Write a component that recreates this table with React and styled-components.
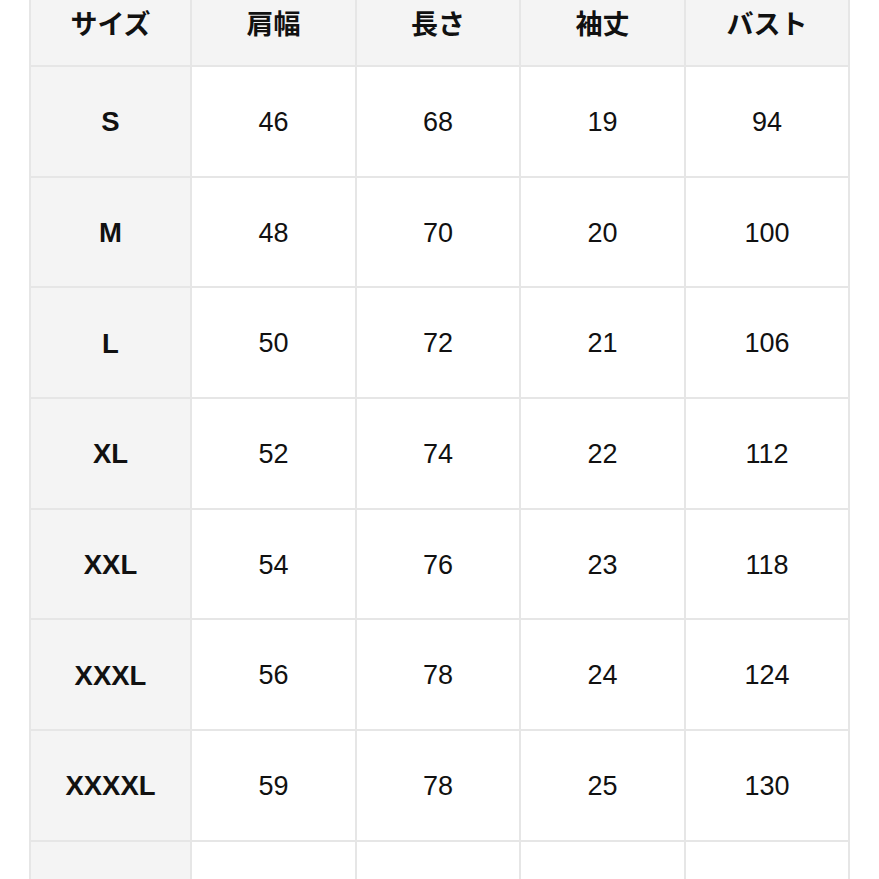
import React from 'react'
import styled, { createGlobalStyle } from 'styled-components'

const GlobalStyle = createGlobalStyle`
    body {
        margin: 0;
        background: #ffffff;
        overflow: hidden;
    }
`

const Page = styled.div`
    width: 879px;
    height: 879px;
    overflow: hidden;
    background: #ffffff;
`

const Grid = styled.div`
    margin: -24px 0 0 29px;
    width: 821px;
    display: grid;
    grid-template-columns: 159px 163px 162px 163px 162px;
    grid-template-rows: 87px;
    grid-auto-rows: 108.7px;
    gap: 2px;
    padding: 2px;
    box-sizing: border-box;
    background: #e6e6e6;
`

const Cell = styled.div`
    display: flex;
    align-items: center;
    justify-content: center;
    padding-top: 2px;
    box-sizing: border-box;
    background: ${p => (p.$shaded ? '#f4f4f4' : '#ffffff')};
    color: #111111;
    font-family: ${p => (p.$head ? '"Noto Sans CJK JP", "Liberation Sans", sans-serif' : '"Liberation Sans", Arial, sans-serif')};
    font-size: ${p => (p.$bold && !p.$head ? '27.5px' : '27px')};
    font-weight: ${p => (p.$bold ? 700 : 400)};
`

const headers = ['サイズ', '肩幅', '長さ', '袖丈', 'バスト']

const rows = [
    ['S', 46, 68, 19, 94],
    ['M', 48, 70, 20, 100],
    ['L', 50, 72, 21, 106],
    ['XL', 52, 74, 22, 112],
    ['XXL', 54, 76, 23, 118],
    ['XXXL', 56, 78, 24, 124],
    ['XXXXL', 59, 78, 25, 130],
    ['', '', '', '', ''],
]

const App = () => {
    return (
        <Page>
            <GlobalStyle />
            <Grid>
                {headers.map(h => (
                    <Cell key={h} $head $shaded $bold>{h}</Cell>
                ))}
                {rows.map((row, i) =>
                    row.map((v, j) => (
                        <Cell key={i + '-' + j} $shaded={j === 0} $bold={j === 0}>{v}</Cell>
                    ))
                )}
            </Grid>
        </Page>
    )
}

export default App
